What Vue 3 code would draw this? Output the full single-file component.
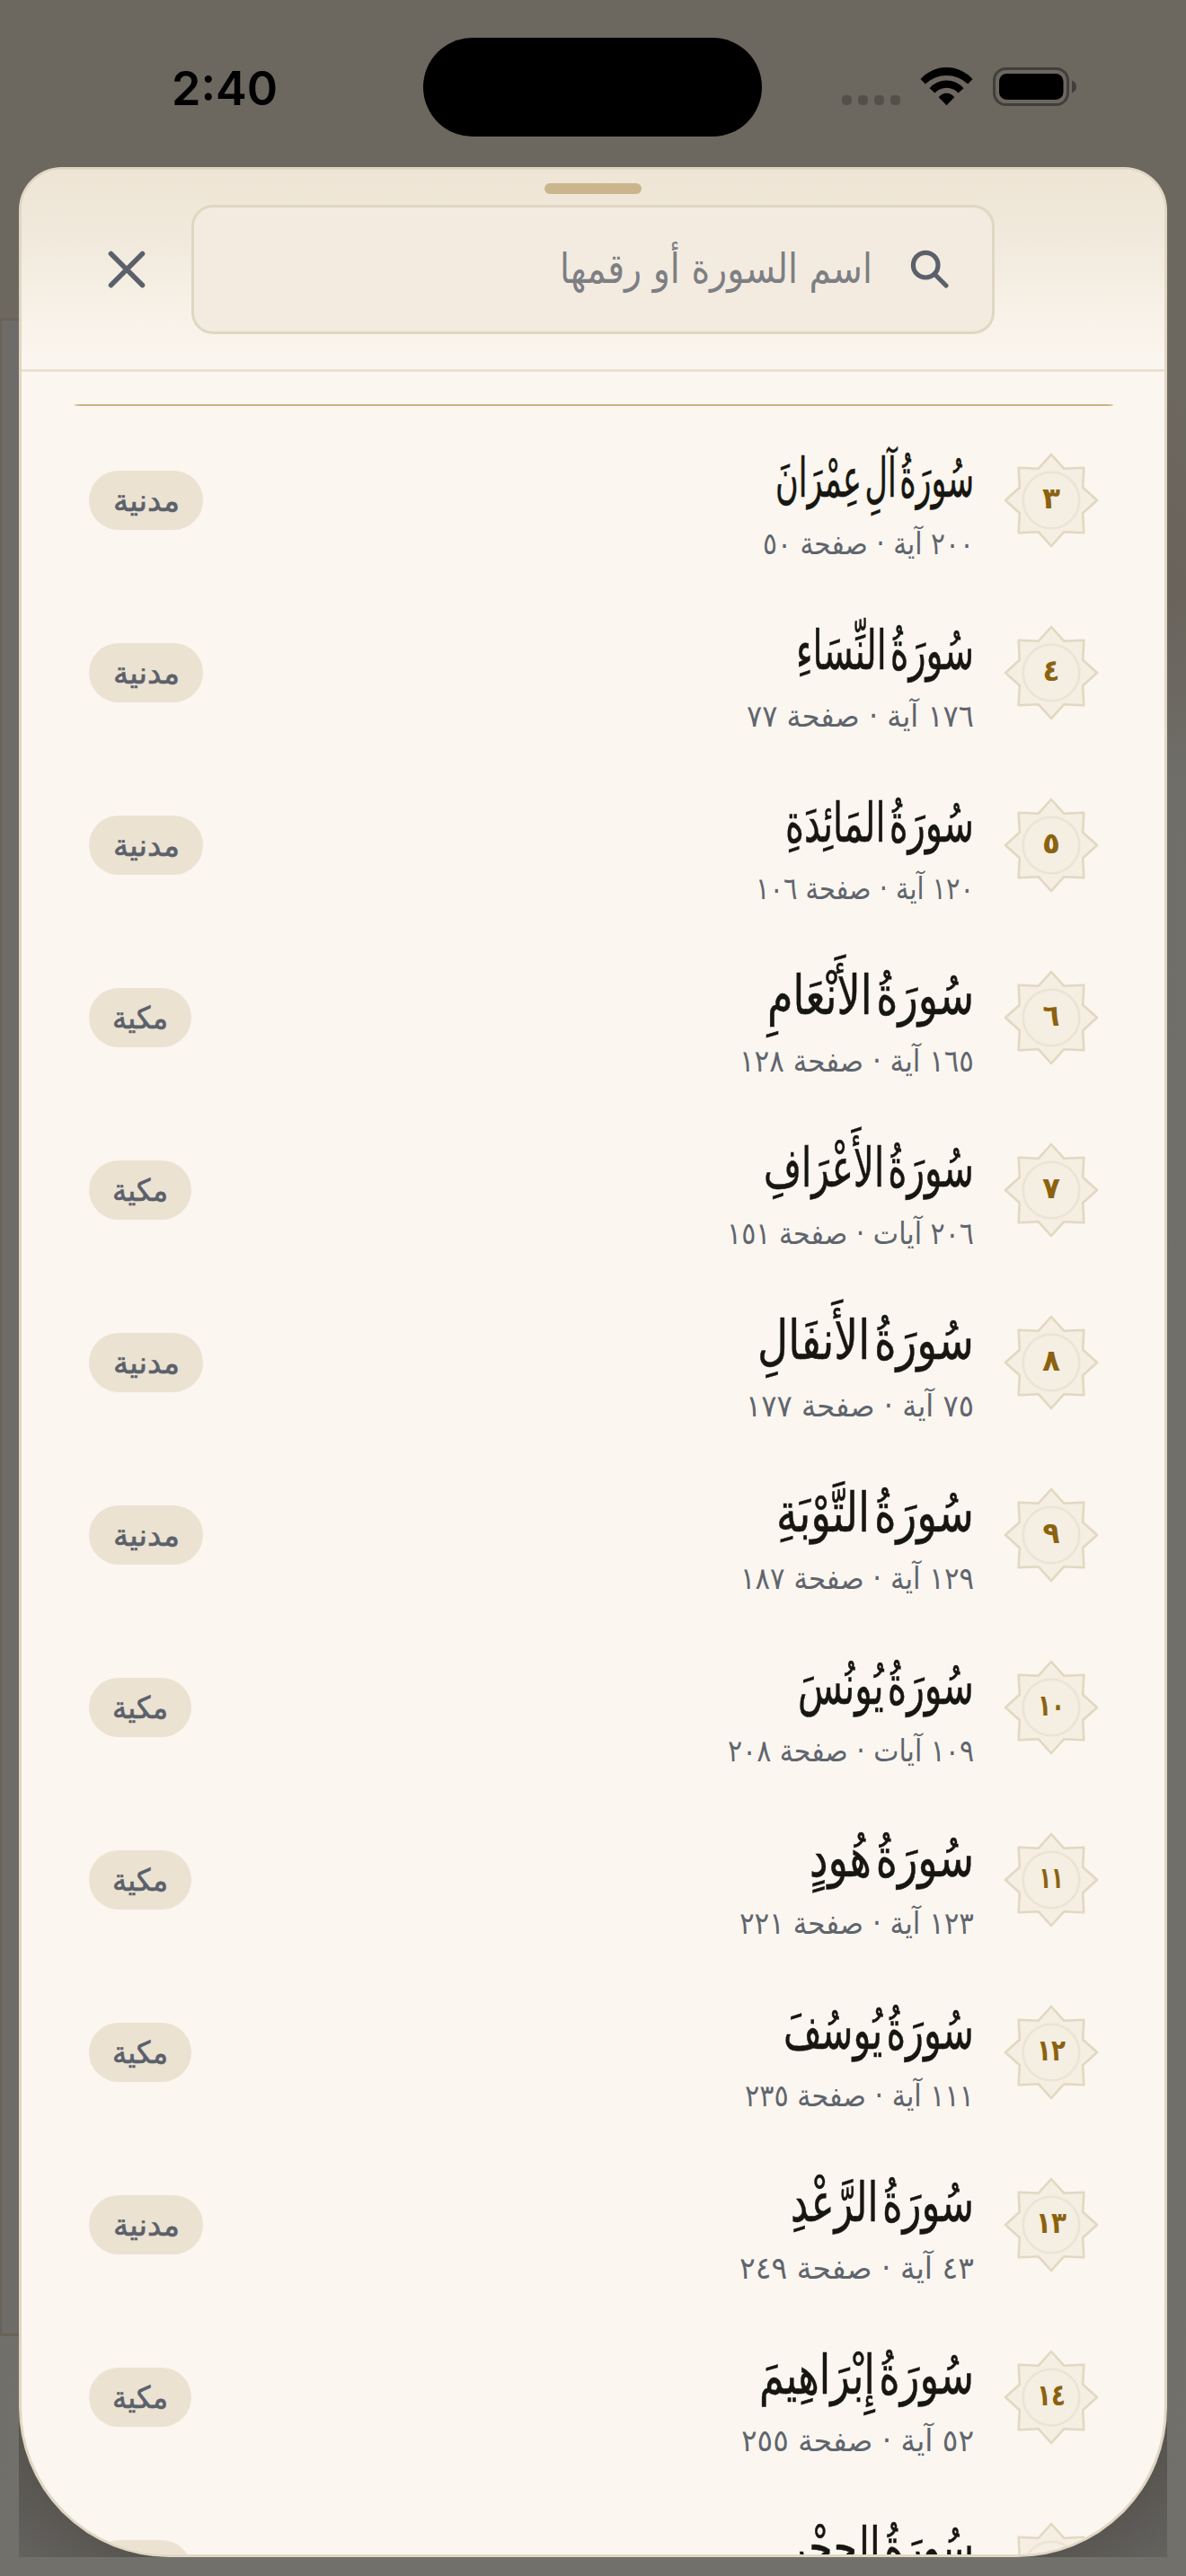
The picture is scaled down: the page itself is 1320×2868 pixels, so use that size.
<script setup>
const right = 1081
const surahs = [
  { num: '٣', name: 'سُورَةُ آلِ عِمْرَانَ', meta: '٢٠٠ آية · صفحة ٥٠', place: 'مدنية', nameLeft: 864, metaLeft: 850, numW: 20 },
  { num: '٤', name: 'سُورَةُ النِّسَاءِ', meta: '١٧٦ آية · صفحة ٧٧', place: 'مدنية', nameLeft: 887, metaLeft: 832, numW: 19 },
  { num: '٥', name: 'سُورَةُ المَائِدَةِ', meta: '١٢٠ آية · صفحة ١٠٦', place: 'مدنية', nameLeft: 875, metaLeft: 842, numW: 20 },
  { num: '٦', name: 'سُورَةُ الأَنْعَامِ', meta: '١٦٥ آية · صفحة ١٢٨', place: 'مكية', nameLeft: 855, metaLeft: 824, numW: 19 },
  { num: '٧', name: 'سُورَةُ الأَعْرَافِ', meta: '٢٠٦ آيات · صفحة ١٥١', place: 'مكية', nameLeft: 851, metaLeft: 810, numW: 20 },
  { num: '٨', name: 'سُورَةُ الأَنفَالِ', meta: '٧٥ آية · صفحة ١٧٧', place: 'مدنية', nameLeft: 844, metaLeft: 831, numW: 20 },
  { num: '٩', name: 'سُورَةُ التَّوْبَةِ', meta: '١٢٩ آية · صفحة ١٨٧', place: 'مدنية', nameLeft: 865, metaLeft: 825, numW: 19 },
  { num: '١٠', name: 'سُورَةُ يُونُسَ', meta: '١٠٩ آيات · صفحة ٢٠٨', place: 'مكية', nameLeft: 889, metaLeft: 811, numW: 30 },
  { num: '١١', name: 'سُورَةُ هُودٍ', meta: '١٢٣ آية · صفحة ٢٢١', place: 'مكية', nameLeft: 902, metaLeft: 824, numW: 27 },
  { num: '١٢', name: 'سُورَةُ يُوسُفَ', meta: '١١١ آية · صفحة ٢٣٥', place: 'مكية', nameLeft: 873, metaLeft: 830, numW: 32 },
  { num: '١٣', name: 'سُورَةُ الرَّعْدِ', meta: '٤٣ آية · صفحة ٢٤٩', place: 'مدنية', nameLeft: 881, metaLeft: 824, numW: 34 },
  { num: '١٤', name: 'سُورَةُ إِبْرَاهِيمَ', meta: '٥٢ آية · صفحة ٢٥٥', place: 'مكية', nameLeft: 846, metaLeft: 826, numW: 32 },
  { num: '١٥', name: 'سُورَةُ الحِجْرِ', meta: '٩٩ آية · صفحة ٢٦٢', place: 'مكية', nameLeft: 878, metaLeft: 826, numW: 32 }
]
const star = '0,-51 14.3,-35.2 36.3,-36.3 35.2,-14.3 51,0 35.2,14.3 36.3,36.3 14.3,35.2 0,51 -14.3,35.2 -36.3,36.3 -35.2,14.3 -51,0 -35.2,-14.3 -36.3,-36.3 -14.3,-35.2'
</script>

<template>
  <div class="screen">
    <div class="page-edge"></div>
    <div class="shade"></div>

    <header class="status">
      <div class="clock">
        <svg width="114" height="52" viewBox="0 0 114 52"><text x="-2" y="44" textLength="118" lengthAdjust="spacingAndGlyphs" class="clock-text">2:40</text></svg>
      </div>
      <div class="island"></div>
      <svg class="indicators" width="264" height="48" viewBox="0 0 264 48">
        <g fill="#53504a">
          <rect x="0" y="34" width="11" height="11" rx="4.5" />
          <rect x="18" y="34" width="11" height="11" rx="4.5" />
          <rect x="36" y="34" width="11" height="11" rx="4.5" />
          <rect x="54" y="34" width="11" height="11" rx="4.5" />
        </g>
        <g transform="translate(87.5 3)" fill="#000">
          <path d="M0 13 A38.8 38.8 0 0 1 58 13 L52.7 18.5 A34.3 34.3 0 0 0 5.3 18.5 Z" />
          <path d="M10 23.3 A24.9 24.9 0 0 1 48 23.3 L42 28.5 A17.5 17.5 0 0 0 16 28.5 Z" />
          <path d="M20.2 33.3 A10.7 10.7 0 0 1 37.8 33.3 L29 42.2 Z" />
        </g>
        <rect x="169.5" y="4.5" width="82" height="40" rx="13" fill="none" stroke="#413f3b" stroke-width="3" />
        <rect x="175" y="10" width="71.5" height="29" rx="8.5" />
        <path d="M256 17.5 q5 2 5 7 q0 5 -5 7 Z" fill="#413f3b" />
      </svg>
    </header>

    <main class="sheet">
      <div class="handle"></div>
      <div class="topbar">
        <svg class="close" width="46" height="46" viewBox="0 0 46 46"><path d="M5.5 5.5 L40.5 40.5 M40.5 5.5 L5.5 40.5" /></svg>
        <div class="search">
          <svg width="345" height="80" viewBox="0 0 345 80"><text x="346" y="55" textLength="348" lengthAdjust="spacingAndGlyphs" class="placeholder">اسم السورة أو رقمها</text></svg>
          <svg class="glass" width="46" height="46" viewBox="0 0 46 46"><circle cx="18.2" cy="18.2" r="13.8" /><path d="M28.5 28.5 L41 41" /></svg>
        </div>
      </div>
      <div class="rule"></div>

      <div v-for="s in surahs" :key="s.num" class="row">
        <span class="pill" :class="{ wide: s.place === 'مدنية' }">
          <svg :width="s.place === 'مدنية' ? 74 : 62" height="50" :viewBox="`0 0 ${s.place === 'مدنية' ? 74 : 62} 50`"><text :x="s.place === 'مدنية' ? 74 : 62" y="36.5" :textLength="s.place === 'مدنية' ? 74 : 62" lengthAdjust="spacingAndGlyphs" class="pill-text">{{ s.place }}</text></svg>
        </span>
        <div class="titles">
          <svg width="300" height="92" viewBox="0 0 300 92"><text x="303" y="67" :textLength="right - s.nameLeft + 4" lengthAdjust="spacingAndGlyphs" class="name">{{ s.name }}</text></svg>
          <svg width="300" height="50" viewBox="0 0 300 50"><text x="303" y="38.5" :textLength="right - s.metaLeft + 4" lengthAdjust="spacingAndGlyphs" class="meta">{{ s.meta }}</text></svg>
        </div>
        <svg class="badge" width="108" height="108" viewBox="-54 -54 108 108">
          <polygon :points="star" fill="#f5eee2" stroke="#e2d8c2" stroke-width="2.6" stroke-linejoin="round" />
          <circle r="31.3" fill="none" stroke="#ece3d3" stroke-width="2.6" />
          <text :x="s.numW / 2" y="9" :textLength="s.numW" lengthAdjust="spacingAndGlyphs" class="num">{{ s.num }}</text>
        </svg>
      </div>
    </main>
  </div>
</template>

<style>
body { margin: 0; background: #706f69; }
</style>

<style scoped>
.screen { position: relative; width: 1320px; height: 2868px; overflow: hidden; background: linear-gradient(#6c675f 0, #6c675f 400px, #69635b 660px, #6f6e68 880px, #71706a 100%); }
svg { display: block; flex: none; overflow: visible; }
text { direction: rtl; font-family: "DejaVu Sans", "Noto Sans", sans-serif; }
.page-edge { position: absolute; left: -4px; top: 354px; width: 60px; height: 2241px; border: 3px solid #6a6258; border-left-width: 6px; background: #6d6c69; }
.shade { position: absolute; left: 21px; top: 2500px; width: 1278px; height: 347px; background: radial-gradient(ellipse 700px 300px at 50% 50%, #4e4b46 0, #4e4b46 80%, #686663 112%); }
.status { position: relative; display: flex; height: 186px; box-sizing: border-box; padding: 42px 0 0 193px; }
.clock { padding-top: 31px; width: 278px; }
.clock-text { direction: ltr; font: 600 52.5px Inter, "Liberation Sans", sans-serif; }
.island { width: 377px; height: 110px; border-radius: 55px; background: #000; }
.indicators { margin: 30px 0 0 89px; }
.sheet { position: relative; box-sizing: border-box; margin-left: 21px; width: 1278px; height: 2661px; overflow: hidden; border: 3px solid #e0d7c3; border-radius: 48px 48px 167px 167px; background: #fbf6ef; }
.handle { position: absolute; left: 582px; top: 15px; width: 108px; height: 12px; border-radius: 6px; background: #cbb58d; }
.topbar { box-sizing: border-box; height: 225px; padding: 39px 0 0 94px; display: flex; border-bottom: 3px solid #eae1d1; background: linear-gradient(#eee5d5 0, #f1e9dc 35%, #f7f1e7 70%, #fbf6f0 100%); }
.close { margin: 49px 49px 0 0; fill: none; stroke: #5b616b; stroke-width: 5.5; stroke-linecap: round; }
.search { box-sizing: border-box; width: 894px; height: 144px; border: 3.5px solid #e0d7c3; border-radius: 24px; background: #f3ebdf; display: flex; justify-content: flex-end; align-items: center; padding-right: 46px; gap: 42px; }
.placeholder { font-size: 46px; fill: #7d7f84; }
.glass { fill: none; stroke: #5b616b; stroke-width: 5.2; stroke-linecap: round; }
.rule { height: 2px; margin: 36px 57px 9px 59px; border-radius: 8px / 1px; background: #cbb286; }
.row { height: 192px; display: flex; align-items: center; padding: 0 72px 0 75px; }
.pill { display: flex; align-items: center; justify-content: center; width: 114px; height: 66px; border-radius: 33px; background: #ebe2d1; }
.pill.wide { width: 127px; }
.pill-text { font-size: 34px; fill: #5b616b; stroke: #5b616b; stroke-width: .7; }
.titles { margin-left: auto; margin-right: 35px; height: 142px; }
.name { font-size: 60px; word-spacing: -13px; fill: #171611; stroke: #171611; stroke-width: .5; }
.meta { font-size: 34px; fill: #5f656e; }
.num { font-size: 33px; font-weight: 700; fill: #8b6210; }
</style>
